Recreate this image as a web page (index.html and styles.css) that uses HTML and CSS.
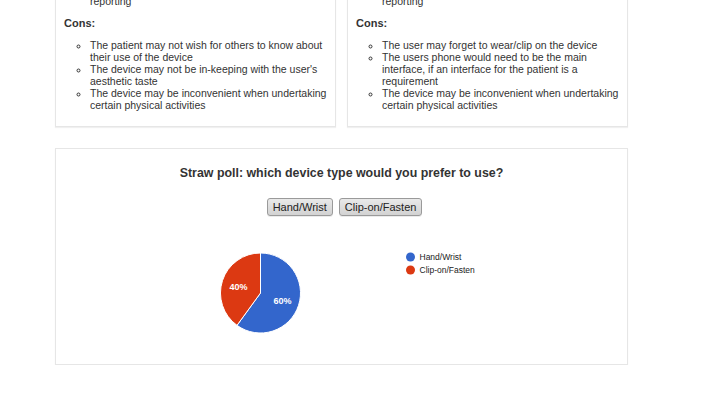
FILE: index.html
```html
<!DOCTYPE html>
<html lang="en">
<head>
    <meta charset="UTF-8">
    <meta name="viewport" content="width=device-width, initial-scale=1.0">
    <title>Device Types</title>
    <link rel="stylesheet" href="styles.css">
</head>
<body>
    <div class="page">
        <div class="device-row">
            <div class="device-card">
                <ul class="points pros">
                    <li>Could provide a more accurate form of symptom reporting</li>
                </ul>
                <h4>Cons:</h4>
                <ul class="points">
                    <li>The patient may not wish for others to know about their use of the device</li>
                    <li>The device may not be in-keeping with the user's aesthetic taste</li>
                    <li>The device may be inconvenient when undertaking certain physical activities</li>
                </ul>
            </div>
            <div class="device-card">
                <ul class="points pros">
                    <li>Could provide a more accurate form of symptom reporting</li>
                </ul>
                <h4>Cons:</h4>
                <ul class="points">
                    <li>The user may forget to wear/clip on the device</li>
                    <li>The users phone would need to be the main interface, if an interface for the patient is a requirement</li>
                    <li>The device may be inconvenient when undertaking certain physical activities</li>
                </ul>
            </div>
        </div>

        <div class="poll-card">
            <h3>Straw poll: which device type would you prefer to use?</h3>
            <div class="poll-buttons">
                <button type="button" class="vote">Hand/Wrist</button>
                <button type="button" class="vote">Clip-on/Fasten</button>
            </div>
            <svg class="poll-chart" width="400" height="130" viewBox="0 0 400 130">
                <!-- pie: 60% / 40% -->
                <path d="M118.5,70 L118.5,30 A40,40 0 1,1 94.99,102.36 Z" fill="#3366cc" stroke="#fff" stroke-width="1"/>
                <path d="M118.5,70 L94.99,102.36 A40,40 0 0,1 118.5,30 Z" fill="#dc3912" stroke="#fff" stroke-width="1"/>
                <text class="slice-label" x="140.5" y="80.5">60%</text>
                <text class="slice-label" x="96.5" y="66.5">40%</text>
                <!-- legend -->
                <circle cx="268.5" cy="34" r="4.5" fill="#3366cc"/>
                <text class="legend-label" x="277.5" y="37">Hand/Wrist</text>
                <circle cx="268.5" cy="47" r="4.5" fill="#dc3912"/>
                <text class="legend-label" x="277.5" y="50">Clip-on/Fasten</text>
            </svg>
        </div>
    </div>
</body>
</html>
```

FILE: styles.css
```css
body {
    font-family: 'Liberation Sans', Arial, sans-serif;
    font-size: 11px;
    line-height: 12px;
    color: #333;
    background-color: #fff;
    margin: 0;
    padding: 0;
}
.page {
    width: 573px;
    margin: -38px 0 0 55px;
}
.device-row {
    display: flex;
    gap: 11px;
}
.device-card {
    flex: 1;
    background: #fff;
    border: 1px solid #e6e6e6;
    box-shadow: 0 1px 1px rgba(0, 0, 0, 0.06);
    padding: 0 3px 15px 8px;
}
.device-card h4 {
    font-size: 11px;
    line-height: 12px;
    font-weight: bold;
    margin: 10px 0;
}
.points {
    list-style: circle;
    font-size: 10.5px;
    margin: 10px 0 0;
    padding-left: 26px;
}
.points.pros {
    margin-top: 20px;
}
.poll-card {
    margin-top: 21px;
    height: 217px;
    box-sizing: border-box;
    background: #fff;
    border: 1px solid #e6e6e6;
    box-shadow: 0 1px 1px rgba(0, 0, 0, 0.06);
    padding-top: 16px;
    display: flex;
    flex-direction: column;
    align-items: center;
}
.poll-card h3 {
    font-size: 12.4px;
    line-height: 16px;
    font-weight: bold;
    margin: 0;
}
.poll-buttons {
    display: flex;
    gap: 6px;
    margin-top: 17px;
    margin-left: 6px;
}
.vote {
    font-family: 'Liberation Sans', Arial, sans-serif;
    font-size: 11px;
    height: 18px;
    padding: 0 5px;
    color: #222;
    background: linear-gradient(#e9e9e9, #d2d2d2);
    border: 1px solid #9a9a9a;
    border-radius: 3px;
    box-shadow: 0 1px 0 rgba(0, 0, 0, 0.08);
    cursor: pointer;
}
.poll-chart {
    display: block;
    margin-top: 7px;
}
.slice-label {
    font-family: 'Liberation Sans', Arial, sans-serif;
    font-size: 9px;
    font-weight: bold;
    fill: #fff;
    text-anchor: middle;
}
.legend-label {
    font-family: 'Liberation Sans', Arial, sans-serif;
    font-size: 8.5px;
    fill: #222;
}
```
